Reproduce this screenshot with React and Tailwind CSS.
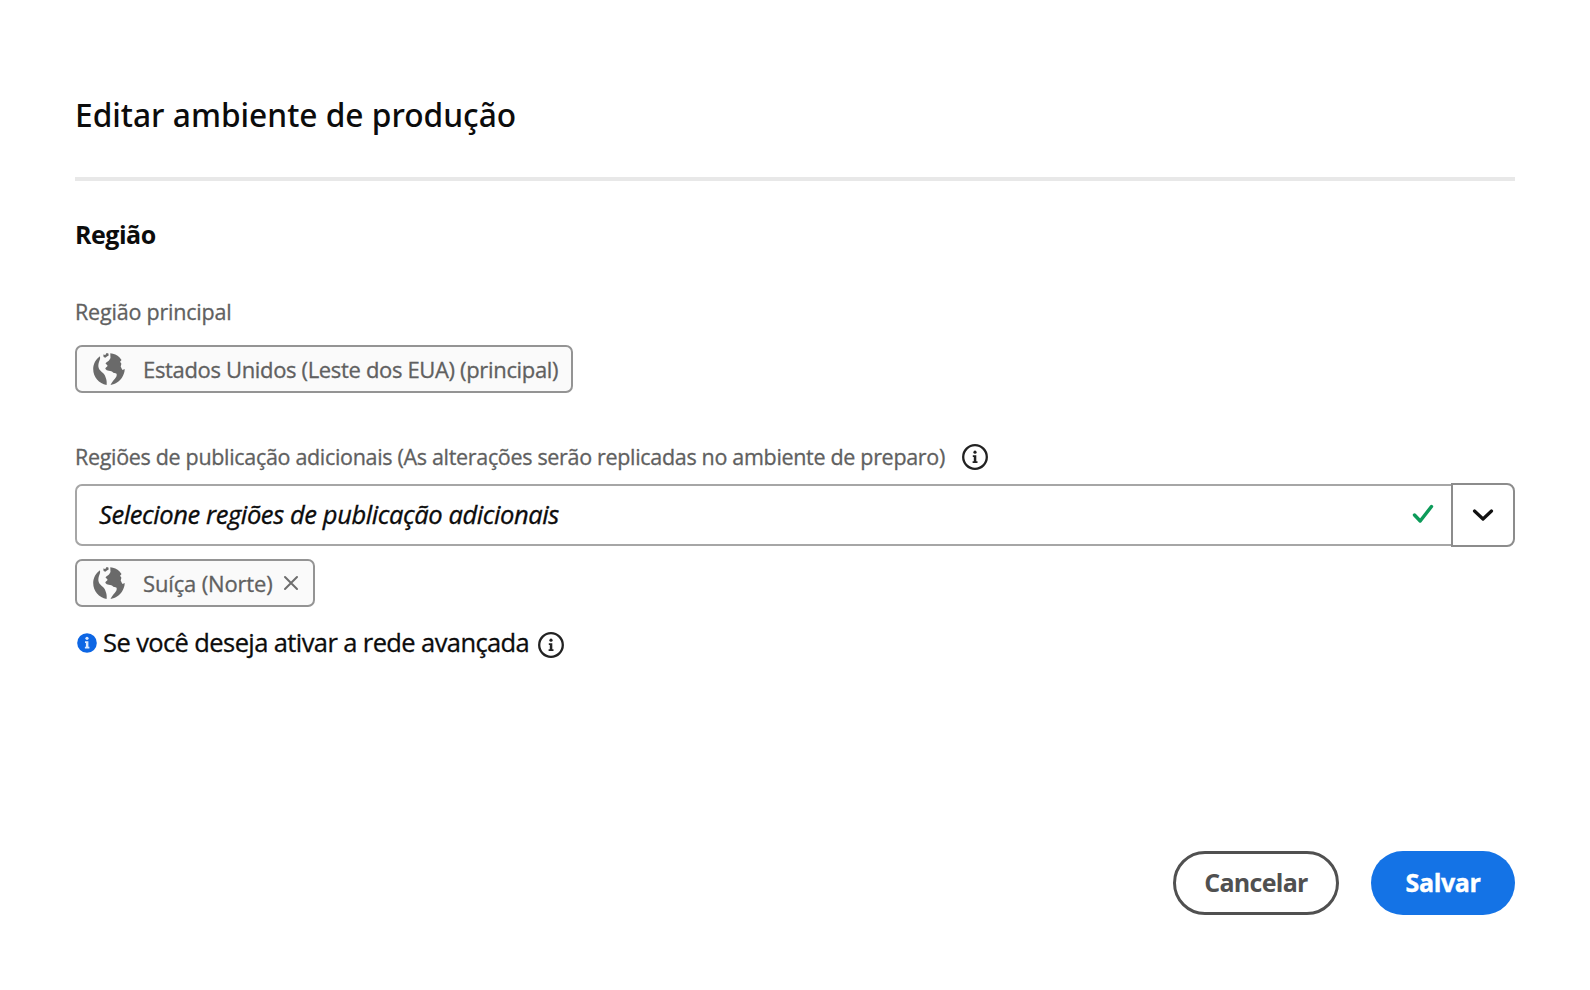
function Globe() {
  return (
    <svg className="h-[34px] w-[34px] shrink-0" viewBox="0 0 34 34" fill="#6a6a6a" aria-hidden="true">
      <path d="M8 4.200C3.800 7 1.200 11.700 1.200 17c0 8 5.800 14.700 13.400 15.900.3-2.200.1-4.200-.6-6.400-.7-2.300-1.200-4-3-5.600-1.700-1.500-3.400-2.500-4.200-4.700-.7-2-.5-3.900.1-5.900.5-1.800 1.600-3.300 1.100-6.100z" />
      <path d="M11.300 2.500l2 .6 1.300-2 1.800.5.300 2-1.800 1-1.600 1.100-1.700-.8z" />
      <path d="M18.300 1.200c3.600.4 6.800 1.800 9.300 4.200l1.900 2.700-1.400 1.600 1.300 2.100-.7 2.600.8 1.800 1 1.700 2.200-.8c0 3-1 5.800-2.500 8.200-2.500 4-6.500 7-11.700 7.700 1.300-2.400 2.600-4.200 4.200-6 1.400-1.700 2.200-3.100 2-4.800-.2-1.200-2-1.200-3.400-1.500-1.200-1.500-2.800-1.800-4.500-2-1.300-.2-2.800-.8-3.500-2 .1-1.200 1.600-1.600 2.200-2.700.2-1.100-1.400-1.500-2-2.400.4-1.600 2.400-2.200 3.500-3.200 1.300-1.300 1.700-2.400 1.400-3.800z" />
    </svg>
  );
}

function Info({ className = "" }) {
  return (
    <svg className={"h-[26px] w-[26px] shrink-0 " + className} viewBox="0 0 26 26" aria-hidden="true">
      <circle cx="13" cy="13" r="11.800" fill="none" stroke="#222" strokeWidth="2.300" />
      <circle cx="13" cy="8.200" r="1.600" fill="#222" />
      <path d="M10.800 11.300h3.500v6h1.200v1.800h-4.900v-1.800h1.200v-4.200h-1z" fill="#222" />
    </svg>
  );
}

function Tag({ children, className }) {
  return (
    <div className={"flex h-12 items-center rounded-[7px] border-2 border-[#949494] bg-[#fafafa] pl-[15px] text-[22px] leading-[30px] text-[#606060] [-webkit-text-stroke:0.3px] " + className}>
      <Globe />
      {children}
    </div>
  );
}

export default function App() {
  return (
    <main className="flex h-[990px] w-[1590px] flex-col bg-white px-[75px] pt-[95px] font-['Open_Sans','Noto_Sans',sans-serif] whitespace-nowrap text-[#0c0c0c]">
      <h1 className="font-['Noto_Sans',sans-serif] text-[31.700px] leading-10 font-medium">Editar ambiente de produção</h1>
      <hr className="mt-[42px] h-[4px] border-0 bg-[#e8e8e8]" />

      <h2 className="mt-[35px] text-[25px] leading-9 font-bold tracking-[-0.5px]">Região</h2>

      <p className="mt-[45px] text-[21.500px] leading-[30px] tracking-[-0.2px] text-[#606060] [-webkit-text-stroke:0.3px]">Região principal</p>
      <Tag className="mt-[18px] w-[498px]">
        <span className="ml-[17px] tracking-[-0.34px]">Estados Unidos (Leste dos EUA) (principal)</span>
      </Tag>

      <div className="mt-[49px] flex h-[30px] items-center">
        <label className="w-[887px] text-[21.500px] leading-[30px] tracking-[-0.32px] text-[#606060] [-webkit-text-stroke:0.3px]">
          Regiões de publicação adicionais (As alterações serão replicadas no ambiente de preparo)
        </label>
        <Info />
      </div>

      <div className="mt-[11px] flex h-[64px] items-center">
        <div className="flex h-[62px] flex-1 items-center rounded-l-[7px] border-2 border-r-0 border-[#a6a6a6] pr-[17px] pb-[2px] pl-[22px]">
          <span className="flex-1 text-[25.500px] leading-9 tracking-[-0.4px] italic [-webkit-text-stroke:0.35px]">Selecione regiões de publicação adicionais</span>
          <svg className="h-5 w-[22px]" viewBox="0 0 22 20" fill="none" stroke="#0d9b5a" strokeWidth="3.400" strokeLinecap="round" strokeLinejoin="round" aria-hidden="true">
            <path d="M2.500 11l5.700 6L19.500 2.500" />
          </svg>
        </div>
        <button className="flex h-[64px] w-[64px] items-center justify-center rounded-r-[8px] border-2 border-[#8c8c8c]">
          <svg className="h-3 w-[22px]" viewBox="0 0 22 12" fill="none" stroke="#111" strokeWidth="3.200" strokeLinecap="round" strokeLinejoin="round" aria-hidden="true">
            <path d="M2.500 2l8.500 8 8.500-8" />
          </svg>
        </button>
      </div>

      <Tag className="mt-3 w-[240px]">
        <span className="ml-[17px] tracking-[-0.15px]">Suíça (Norte)</span>
        <svg className="ml-[10px] h-4 w-4" viewBox="0 0 16 16" stroke="#6e6e6e" strokeWidth="2" strokeLinecap="round" aria-hidden="true">
          <path d="M2 2l12 12M14 2L2 14" />
        </svg>
      </Tag>

      <div className="mt-[17px] flex h-9 items-center">
        <svg className="mt-[2px] ml-[2px] h-5 w-5 shrink-0" viewBox="0 0 20 20" aria-hidden="true">
          <circle cx="10" cy="10" r="9.800" fill="#0d66e4" />
          <circle cx="10" cy="5.300" r="1.600" fill="#dbe9ff" />
          <path d="M8 8.300h3.400v5.400h1v1.800H7.900v-1.800h1v-3.600H8z" fill="#dbe9ff" />
        </svg>
        <p className="ml-[6px] w-[435px] text-[25.500px] leading-9 tracking-[-0.6px] [-webkit-text-stroke:0.3px]">Se você deseja ativar a rede avançada</p>
        <Info className="mt-[6px]" />
      </div>

      <div className="mt-[191px] flex justify-end gap-8">
        <button className="h-16 w-[166px] rounded-full border-[3px] border-[#505050] pb-[3px] text-[25px] leading-9 font-bold tracking-[-0.7px] text-[#505050]">Cancelar</button>
        <button className="h-16 w-36 rounded-full bg-[#1473e6] pb-[3px] text-[25px] leading-9 font-bold tracking-[-0.4px] text-white [-webkit-text-stroke:0.4px]">Salvar</button>
      </div>
    </main>
  );
}
